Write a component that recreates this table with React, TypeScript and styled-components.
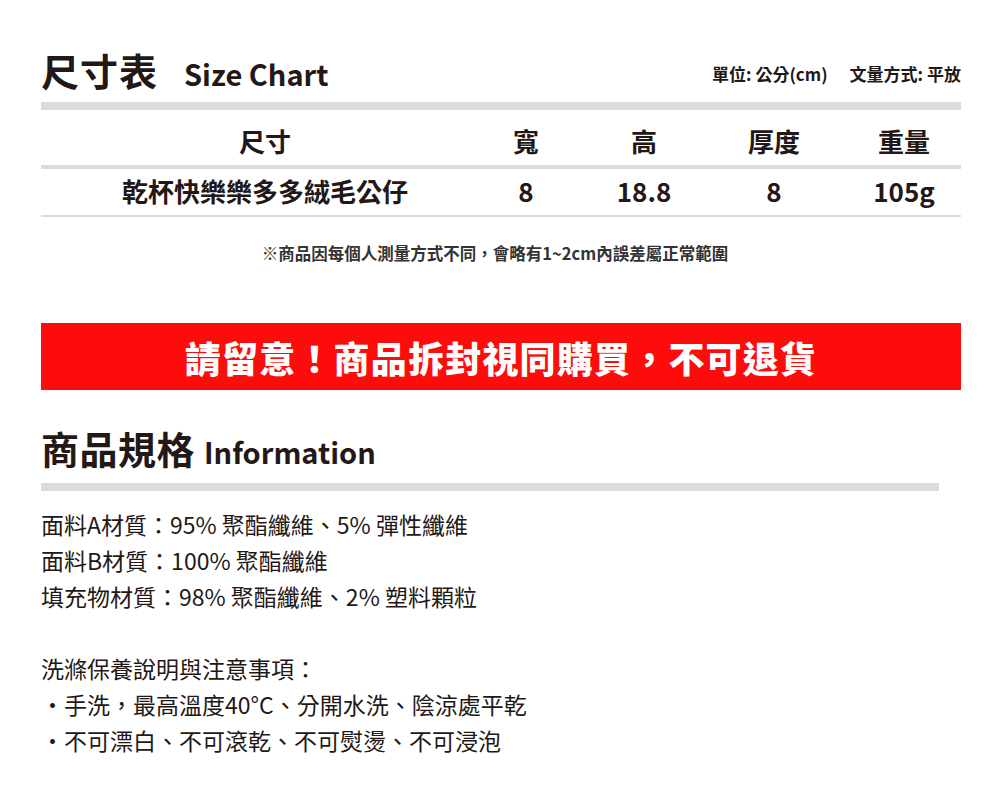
import React from "react";
import styled, { createGlobalStyle } from "styled-components";

const GlobalStyle = createGlobalStyle`
  body {
    margin: 0;
    background: #ffffff;
    font-family: "Noto Sans CJK TC", "Noto Sans", sans-serif;
    color: #231815;
  }
`;

const Page = styled.div`
  width: 920px;
  padding: 0 0 40px 41px;
`;

const TitleRow = styled.div`
  display: flex;
  align-items: baseline;
  padding-top: 50px;
`;

const Title = styled.h1`
  margin: 0;
  font-size: 38px;
  line-height: 40px;
  font-weight: 700;
  letter-spacing: 1px;
`;

const SubTitle = styled.span<{ $gap: number }>`
  margin-left: ${(p) => p.$gap}px;
  font-size: 29px;
  line-height: 30px;
  font-weight: 700;
`;

const Meta = styled.div`
  margin-left: auto;
  align-self: flex-end;
  margin-bottom: 6px;
  display: flex;
  gap: 22px;
  font-size: 17px;
  line-height: 20px;
  font-weight: 700;
`;

const Bar = styled.div<{ $width?: number }>`
  height: 8px;
  width: ${(p) => p.$width ?? 920}px;
  background: #dcdcdc;
  margin-top: ${(p) => (p.$width ? 13 : 12)}px;
`;

const TableRow = styled.div<{ $head?: boolean }>`
  display: grid;
  grid-template-columns: 448px 74px 162px 98px 138px;
  font-size: 26px;
  line-height: 30px;
  font-weight: 700;
  padding: ${(p) => (p.$head ? "16px 0 9px" : "7px 0 9px")};
  border-bottom: ${(p) => (p.$head ? "4px" : "2px")} solid #dcdcdc;
`;

const Cell = styled.div<{ $last?: boolean }>`
  text-align: center;
  padding-left: ${(p) => (p.$last ? 24 : 0)}px;
`;

const Note = styled.p`
  margin: 26px 0 0;
  text-align: center;
  font-size: 16.5px;
  line-height: 20px;
  font-weight: 700;
  color: #333333;
  padding-right: 12px;
`;

const Warning = styled.div`
  margin-top: 60px;
  height: 67px;
  background: #fe0b0b;
  color: #ffffff;
  display: flex;
  align-items: center;
  justify-content: center;
  font-size: 36px;
  font-weight: 900;
  letter-spacing: 1.2px;
`;

const InfoTitleRow = styled(TitleRow)`
  padding-top: 36px;
`;

const InfoTitle = styled(Title)`
  line-height: 44px;
  letter-spacing: 0.5px;
`;

const Info = styled.div`
  margin-top: 15px;
  font-size: 23px;
  line-height: 36px;
`;

const Line = styled.div`
  min-height: 36px;
`;

const head = ["尺寸", "寬", "高", "厚度", "重量"];
const row = ["乾杯快樂樂多多絨毛公仔", "8", "18.8", "8", "105g"];

const info = [
  "面料A材質：95% 聚酯纖維、5% 彈性纖維",
  "面料B材質：100% 聚酯纖維",
  "填充物材質：98% 聚酯纖維、2% 塑料顆粒",
  "",
  "洗滌保養說明與注意事項：",
  "・手洗，最高溫度40°C、分開水洗、陰涼處平乾",
  "・不可漂白、不可滾乾、不可熨燙、不可浸泡",
];

export default function App() {
  return (
    <>
      <GlobalStyle />
      <Page>
        <TitleRow>
          <Title>尺寸表</Title>
          <SubTitle $gap={26}>Size Chart</SubTitle>
          <Meta>
            <span>單位: 公分(cm)</span>
            <span>文量方式: 平放</span>
          </Meta>
        </TitleRow>
        <Bar />

        <TableRow $head>
          {head.map((h, i) => (
            <Cell key={h} $last={i === head.length - 1}>
              {h}
            </Cell>
          ))}
        </TableRow>
        <TableRow>
          {row.map((v, i) => (
            <Cell key={i} $last={i === row.length - 1}>
              {v}
            </Cell>
          ))}
        </TableRow>

        <Note>※商品因每個人測量方式不同，會略有1~2cm內誤差屬正常範圍</Note>

        <Warning>請留意！商品拆封視同購買，不可退貨</Warning>

        <InfoTitleRow>
          <InfoTitle>商品規格</InfoTitle>
          <SubTitle $gap={9}>Information</SubTitle>
        </InfoTitleRow>
        <Bar $width={898} />

        <Info>
          {info.map((t, i) => (
            <Line key={i}>{t}</Line>
          ))}
        </Info>
      </Page>
    </>
  );
}
